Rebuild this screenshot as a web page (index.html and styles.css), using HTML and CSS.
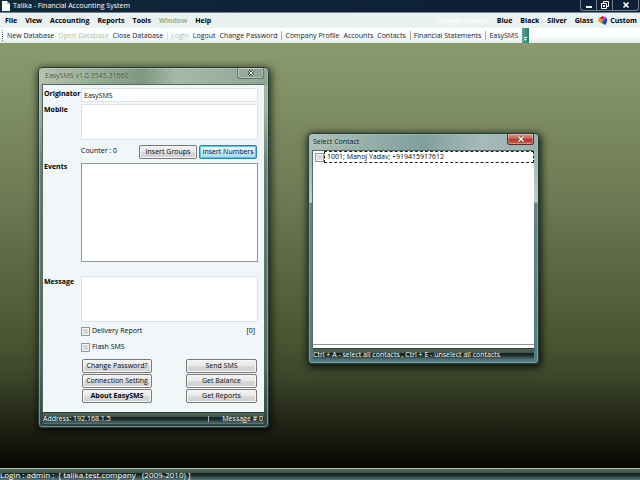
FILE: index.html
```
<!DOCTYPE html>
<html lang="en">
<head>
<meta charset="utf-8">
<title>Talika - Financial Accounting System</title>
<link rel="stylesheet" href="styles.css">
</head>
<body>
<header class="titlebar">
  <svg class="doc-icon" viewBox="0 0 9 10" aria-hidden="true"><path d="M1 0h5l3 3v7H1z" fill="#fff"/><path d="M6 0v3h3z" fill="#a9b4bd"/></svg>
  <h1 class="app-title">Talika - Financial Accounting System</h1>
  <div class="window-controls">
    <button class="control" aria-label="Minimize"><svg viewBox="0 0 10 8"><path d="M2 5h6v2H2z" fill="#fff"/></svg></button>
    <button class="control" aria-label="Restore"><svg viewBox="0 0 10 8"><path d="M3.500 2.500v-2h5v5h-2" fill="none" stroke="#fff"/><path d="M1.500 2.500h5v5h-5z" fill="none" stroke="#fff"/><path d="M3 4h2v2H3z" fill="#fff"/></svg></button>
    <button class="control control-close" aria-label="Close"><svg viewBox="0 0 10 8"><path d="M2.500 1.500l5 5M7.500 1.500l-5 5" stroke="#fff" stroke-width="1.700"/></svg></button>
  </div>
</header>
<nav class="menubar">
  <div class="menus">
    <button>File</button><button>View</button><button>Accounting</button><button>Reports</button><button>Tools</button><button disabled>Window</button><button>Help</button>
  </div>
  <div class="themes">
    <span class="theme-label">Change Colour:</span>
    <button>Blue</button><button>Black</button><button>Silver</button><button>Glass</button>
    <button class="custom"><svg class="palette" viewBox="0 0 10 9" aria-hidden="true"><path d="M1 2l4-2v4z" fill="#d21d1d"/><path d="M5 0l4 2-4 2z" fill="#e433c8"/><path d="M9 2v4L5 4z" fill="#2734e8"/><path d="M1 2l4 2-2 3-3-2z" fill="#f08a1d"/><path d="M5 4l4 2-2 3-3-2z" fill="#1637b8"/><path d="M5 4l-2 3 3 1z" fill="#18a04c"/></svg>Custom</button>
  </div>
</nav>
<div class="toolbar" role="toolbar">
  <span class="grip"></span>
  <button>New Database</button><button disabled>Open Database</button><button>Close Database</button>
  <span class="rule pale"></span>
  <button disabled>Login</button><button>Logout</button><button>Change Password</button>
  <span class="rule"></span>
  <button>Company Profile</button><button>Accounts</button><button>Contacts</button>
  <span class="rule"></span>
  <button>Financial Statements</button>
  <span class="rule"></span>
  <button>EasySMS</button>
  <button class="overflow" aria-label="More buttons"><svg viewBox="0 0 7 14"><path d="M2 8.500h3" stroke="#fff"/><path d="M2 10h3l-1.500 2z" fill="#fff"/></svg></button>
</div>
<main class="desktop">
  <section class="window sms">
    <header class="window-head">
      <h2>EasySMS v1.0.3545.31660</h2>
      <button class="close" aria-label="Close EasySMS"><svg viewBox="0 0 10 8"><path d="M2.500 1.500l5 5M7.500 1.500l-5 5" stroke="#4b5b50" stroke-width="2.600"/><path d="M2.500 1.500l5 5M7.500 1.500l-5 5" stroke="#fff"/></svg></button>
    </header>
    <form class="window-body form">
      <label class="name" for="originator">Originator</label>
      <input class="box" id="originator" type="text" value="EasySMS">
      <label class="name" for="mobile">Mobile</label>
      <textarea class="box mobile" id="mobile"></textarea>
      <div class="field insert">
        <span class="counter">Counter : 0</span>
        <button type="button" class="button">Insert Groups</button>
        <button type="button" class="button active">Insert Numbers</button>
      </div>
      <label class="name" for="events">Events</label>
      <textarea class="box events" id="events" readonly></textarea>
      <label class="name" for="message">Message</label>
      <textarea class="box message" id="message"></textarea>
      <div class="field option"><input type="checkbox" id="delivery"><label for="delivery">Delivery Report</label><output class="length">[0]</output></div>
      <div class="field option"><input type="checkbox" id="flash"><label for="flash">Flash SMS</label></div>
      <div class="field actions">
        <button type="button" class="button">Change Password?</button>
        <button type="button" class="button">Send SMS</button>
        <button type="button" class="button">Connection Setting</button>
        <button type="button" class="button">Get Balance</button>
        <button type="button" class="button strong">About EasySMS</button>
        <button type="button" class="button">Get Reports</button>
      </div>
    </form>
    <footer class="window-status"><span class="grow">Address: 192.168.1.5</span><span class="tick"></span><span>Message # 0</span></footer>
  </section>
  <section class="window contacts">
    <header class="window-head">
      <h2>Select Contact</h2>
      <button class="close" aria-label="Close Select Contact"><svg viewBox="0 0 10 8"><path d="M2.500 1.500l5 5M7.500 1.500l-5 5" stroke="#6d2a24" stroke-width="2.600"/><path d="M2.500 1.500l5 5M7.500 1.500l-5 5" stroke="#fff" stroke-width="1.500"/></svg></button>
    </header>
    <div class="window-body">
      <ul class="list">
        <li><input type="checkbox" id="contact"><label for="contact">1001; Manoj Yadav; +919415917612</label></li>
      </ul>
    </div>
    <footer class="window-status">Ctrl + A - select all contacts , Ctrl + E - unselect all contacts</footer>
  </section>
</main>
<footer class="statusbar">Login : admin ;&nbsp; [ talika.test.company&nbsp;&nbsp; (2009-2010) ]</footer>
</body>
</html>
```
FILE: styles.css
```
* { box-sizing: border-box; }

body {
  margin: 0;
  min-height: 100vh;
  display: flex;
  flex-direction: column;
  font: 7px/10px "Open Sans", "Noto Sans", sans-serif;
  color: #05080a;
}

button {
  margin: 0;
  padding: 0;
  border: 0;
  background: none;
  color: inherit;
  font: inherit;
  white-space: nowrap;
}

h1, h2 { margin: 0; font: inherit; white-space: nowrap; }
svg { display: block; }

.titlebar {
  display: flex;
  align-items: center;
  height: 13px;
  padding-left: 1px;
  background: linear-gradient(90deg, #102a3a, #0d2137 50%, #0c1f35);
  border-bottom: 1px solid #76818b;
  color: #fff;
}
.doc-icon { width: 9px; height: 10px; margin-right: 3px; }
.app-title { flex: 1; }
.window-controls {
  display: flex;
  align-self: flex-start;
  margin-right: 1px;
  border: 1px solid #74818c;
  border-top: 0;
  border-radius: 0 0 3px 3px;
}
.control {
  display: grid;
  place-items: center;
  width: 16px;
  height: 10px;
  border-right: 1px solid #74818c;
}
.control svg, .close svg { width: 10px; height: 8px; }
.control-close { width: 25px; border-right: 0; }

.menubar {
  display: flex;
  justify-content: space-between;
  align-items: center;
  height: 15px;
  padding: 0 3px 0 5px;
  background: #e9f2f1;
  font-weight: 700;
  color: #000;
}
.menus, .themes { display: flex; align-items: center; gap: 8px; }
.menubar button:disabled { color: #a3ae8c; }
.theme-label { color: #fafdfd; }
.custom { display: flex; align-items: center; gap: 2px; }
.themes .custom { margin-left: -3px; }
.palette { width: 10px; height: 9px; }

.toolbar {
  display: flex;
  align-items: center;
  gap: 4px;
  height: 15px;
  padding-left: 2px;
  background: linear-gradient(#fff, #f9fcfc 60%, #dfeae7);
  color: #1a222a;
}
.toolbar button:disabled { color: #b5bfa2; }
.grip { width: 1px; height: 11px; border-left: 1px dotted #5c7161; }
.rule { width: 1px; height: 9px; background: #9db391; }
.rule.pale { background: #dbe3d6; }
.toolbar .rule + button { margin-left: -1px; }
.overflow { align-self: stretch; width: 7px; background: linear-gradient(90deg, #56a595, #2d7a6c); }
.overflow svg { width: 7px; height: 14px; }

.desktop {
  position: relative;
  flex: 1;
  min-height: 425px;
  background: linear-gradient(#8b9b6e, #6e7b54 35%, #4b5431 70%, #3c4429 79%, #1a1d10 92%, #080703);
}

.window {
  position: absolute;
  width: 231px;
  padding: 0 4px 3px;
  border: 1px solid #263c39;
  border-radius: 4px;
  box-shadow: inset 0 0 0 1px #a9bfb5, 1px 2px 7px 2px rgba(0, 0, 0, .7);
}
.sms {
  left: 38px;
  top: 24px;
  background: linear-gradient(100deg, #b5c2ab, #7d9881 45%, #a6b9a7 60%, #8fa594) top / 100% 17px no-repeat, linear-gradient(#a2b4a3 40px, #648070 100px, #4e6c61 300px, #2b4344);
  box-shadow: inset 0 0 0 1px rgba(190, 212, 202, .5), 1px 2px 7px 2px rgba(0, 0, 0, .6);
}
.contacts {
  left: 308px;
  top: 90px;
  background: linear-gradient(100deg, #afbfb9, #80a09b 50%, #a6bab8 75%, #9bb1b0) top / 100% 17px no-repeat, linear-gradient(#a5b7b5 30px, #c0cecd 68px, #668583 69px, #507a80);
  box-shadow: inset 0 0 0 1px rgba(150, 205, 210, .5), 1px 2px 7px 2px rgba(0, 0, 0, .7);
}
.window-head {
  display: flex;
  align-items: center;
  height: 16px;
  color: #07100e;
}
.window-head h2 { flex: 1; text-shadow: 0 0 4px rgba(255, 255, 255, .6); }
.sms .window-head { padding-left: 2px; color: #465248; }
.close {
  align-self: flex-start;
  display: grid;
  place-items: center;
  width: 27px;
  height: 11px;
  border: 1px solid #63746a;
  border-top: 0;
  border-radius: 0 0 3px 3px;
  box-shadow: inset 0 0 0 1px rgba(255, 255, 255, .3);
}
.contacts .close {
  border-color: #5d2b27;
  background: linear-gradient(#d7988d, #c86454 45%, #b03223 50%, #cf6551);
}
.window-body {
  margin-left: -1px;
  border: solid #526a60;
  border-width: 1px 0 0 1px;
  background: #f1f7f8;
}

.form {
  display: grid;
  grid-template-columns: 37px 1fr;
  row-gap: 2px;
  padding: 3px 6px 9px 1px;
}
.name { padding-top: 1px; font-weight: 700; color: #000; }
.field { grid-column: 2; }
.box {
  display: block;
  width: 100%;
  height: 14px;
  margin: 0;
  padding: 1px 2px;
  border: 1px solid #dce2e6;
  border-radius: 1px;
  background: #fff;
  color: inherit;
  font: inherit;
  resize: none;
}
.mobile { height: 36px; }
.events { height: 99px; margin: 2px 0 12px; border-color: #90979b; border-radius: 0; }
.message { height: 46px; }
.insert { display: flex; gap: 2px; padding: 3px 1px 0 0; }
.counter { flex: 1; padding-top: 1px; }
.insert .button { width: 58px; }
.button {
  height: 14px;
  border: 1px solid #777;
  border-radius: 2px;
  box-shadow: inset 0 0 0 1px #f8f8f8;
  background: linear-gradient(#f2f2f2, #e8e8e8 48%, #d9d9d9 52%, #cfcfcf);
}
.button.active {
  border-color: #2f83ae;
  box-shadow: inset 0 0 0 1px #4fc8f2;
  background: linear-gradient(#eaf6fc, #d8effb 48%, #bde5f9 52%, #a9dbf5);
}
.strong { font-weight: 700; }
.option { display: flex; align-items: center; height: 14px; gap: 2px; padding-right: 3px; }
.length { margin-left: auto; }
input[type="checkbox"] {
  appearance: none;
  flex: none;
  width: 9px;
  height: 9px;
  margin: 0;
  border: 1px solid #92999c;
  background: #d5d9dc;
  box-shadow: inset 0 0 0 1px #f5f5f5;
}
.actions {
  display: grid;
  grid-template-columns: 70px 71px;
  justify-content: space-between;
  row-gap: 1px;
  padding: 3px 1px 0;
}

.window-status, .statusbar {
  display: flex;
  align-items: center;
  height: 12px;
  border-top: 1px solid #7b8f80;
  background: linear-gradient(#4c6554, #40594c 35%, #14211f 40%, #20302f 60%, #59777a);
  color: #fff;
  white-space: nowrap;
}
.window-status { padding-right: 1px; border-color: #304230; }
.grow { flex: 1; }
.tick { width: 1px; height: 6px; margin-right: 13px; background: #a9b9a9; }

.list {
  height: 194px;
  margin: 0;
  padding: 0;
  border-bottom: 1px solid #8f979b;
  background: #fff;
  list-style: none;
}
.contacts .window-body { padding-bottom: 3px; background: #fff; }
.list li { display: flex; align-items: center; padding-left: 2px; }
.list label { flex: 1; height: 12px; padding-left: 2px; border: 1px dashed #222; }

.statusbar { border-color: #b7bcb8; font-size: 8px; }
```
